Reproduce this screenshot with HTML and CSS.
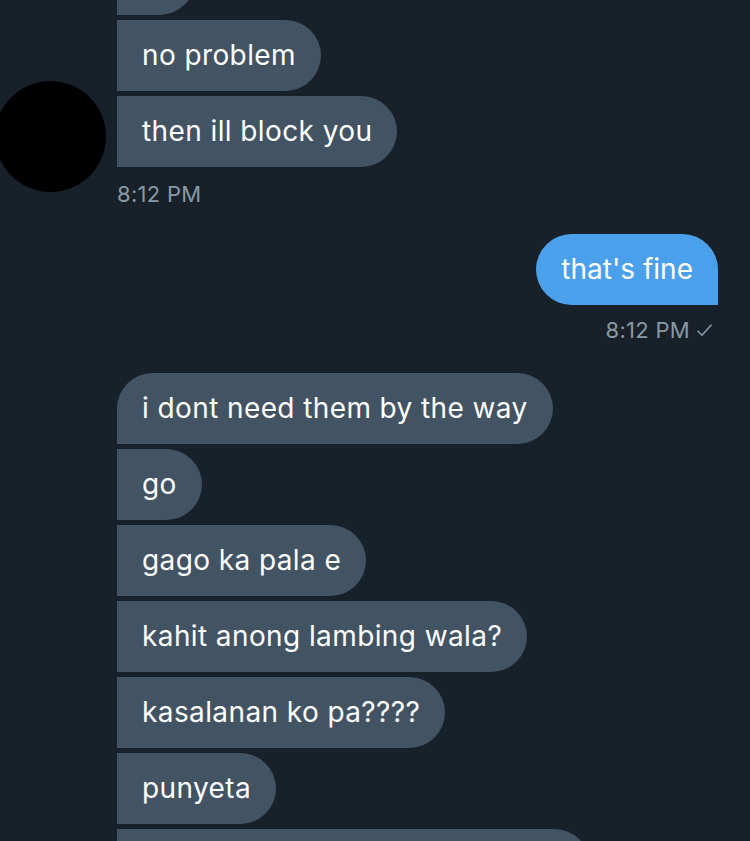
FILE: index.html
```html
<!DOCTYPE html>
<html>
<head>
<meta charset="utf-8">
<link rel="stylesheet" href="styles.css">
</head>
<body>
<div class="chat">
  <div class="group recv top-group">
    <div class="avatar-col"><div class="avatar"></div></div>
    <div class="msgs">
      <div class="bubble first stub stub-top">&nbsp;</div>
      <div class="bubble">no problem</div>
      <div class="bubble">then ill block you</div>
      <div class="time">8:12 PM</div>
    </div>
  </div>
  <div class="group sent">
    <div class="bubble blue">that's fine</div>
    <div class="time sent-time">8:12 PM <svg class="check" width="15" height="13" viewBox="0 0 15 13"><path d="M1 7.2 L5 11.2 L14 1.2" fill="none" stroke="#8899a6" stroke-width="1.6" stroke-linecap="round" stroke-linejoin="round"/></svg></div>
  </div>
  <div class="group recv">
    <div class="avatar-col"></div>
    <div class="msgs">
      <div class="bubble first">i dont need them by the way</div>
      <div class="bubble">go</div>
      <div class="bubble">gago ka pala e</div>
      <div class="bubble">kahit anong lambing wala?</div>
      <div class="bubble">kasalanan ko pa????</div>
      <div class="bubble">punyeta</div>
      <div class="bubble stub stub-bottom">&nbsp;</div>
    </div>
  </div>
</div>
</body>
</html>
```

FILE: styles.css
```css
html, body {
  margin: 0;
  padding: 0;
  background: #18202a;
  overflow: hidden;
}
.chat {
  font-family: "Inter", "Liberation Sans", sans-serif;
  margin-top: -56px;
  display: flex;
  flex-direction: column;
}
.group {
  display: flex;
}
.recv {
  flex-direction: row;
}
.avatar-col {
  width: 117px;
  flex: none;
  display: flex;
  align-items: flex-end;
  padding-bottom: 42px;
  box-sizing: border-box;
}
.avatar {
  width: 111px;
  height: 111px;
  border-radius: 50%;
  background: #000;
  margin-left: -5px;
}
.msgs {
  display: flex;
  flex-direction: column;
  align-items: flex-start;
  gap: 5px;
}
.bubble {
  background: #425364;
  color: #ffffff;
  font-size: 28px;
  letter-spacing: 0.4px;
  line-height: 33px;
  padding: 19px 25px;
  border-radius: 0 36px 36px 0;
  white-space: nowrap;
}
.bubble.first {
  border-radius: 36px 36px 36px 0;
}
.stub-top {
  width: 28px;
}
.stub-bottom {
  width: 423px;
}
.time {
  color: #8899a6;
  font-size: 22px;
  line-height: 24px;
  margin-top: 10px;
  margin-bottom: 28px;
}
.sent {
  flex-direction: column;
  align-items: flex-end;
  padding-right: 32px;
}
.bubble.blue {
  background: #4aa0ea;
  letter-spacing: 0;
  border-radius: 36px 36px 0 36px;
}
.sent-time {
  margin-top: 13px;
  margin-right: 6px;
  display: flex;
  align-items: center;
  gap: 7px;
  margin-bottom: 31px;
}
.sent-time, .time {
  letter-spacing: 0.3px;
}
.check {
  display: block;
}
```
